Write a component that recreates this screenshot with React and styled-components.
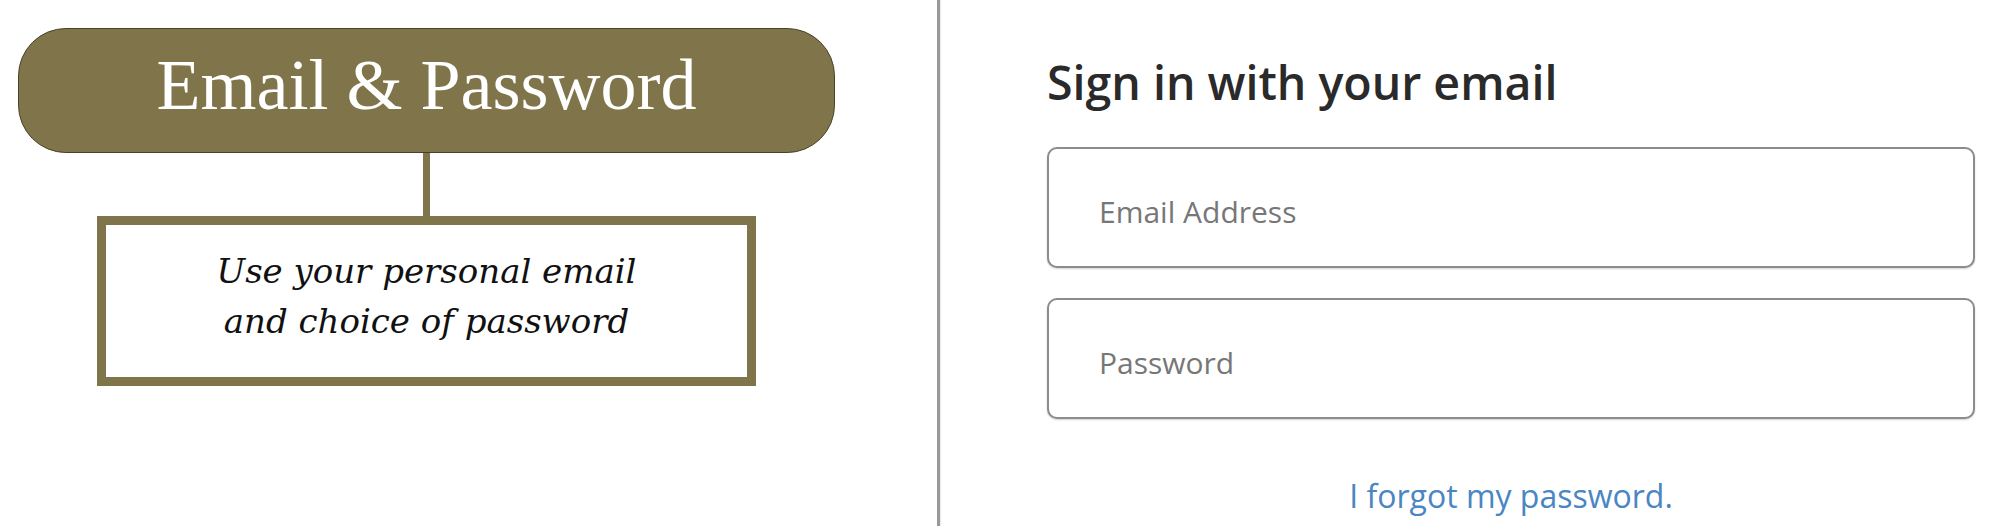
import React from 'react';
import styled, { createGlobalStyle } from 'styled-components';

const GlobalStyle = createGlobalStyle`
  html, body {
    margin: 0;
    padding: 0;
    background: #ffffff;
  }
  #root {
    width: 2000px;
    height: 526px;
    overflow: hidden;
  }
`;

const Page = styled.div`
  display: flex;
  width: 2000px;
  height: 526px;
  background: #fff;
`;

const Diagram = styled.section`
  width: 940px;
  height: 100%;
  box-sizing: border-box;
  padding: 28px 0 0 18px;
  border-right: 3px solid #999;
  box-shadow: 1px 0 1px rgba(0,0,0,0.08);
`;

const Tree = styled.div`
  width: 817px;
  display: flex;
  flex-direction: column;
  align-items: center;
`;

const Pill = styled.div`
  width: 100%;
  height: 125px;
  box-sizing: border-box;
  padding-top: 16px;
  background: #80754a;
  border: 1px solid #4a4228;
  border-radius: 48px;
  text-align: center;
  font-family: "Liberation Serif", "Times New Roman", serif;
  font-size: 72px;
  line-height: 80px;
  color: #ffffff;
`;

const Connector = styled.div`
  width: 7px;
  height: 63px;
  background: #80754a;
`;

const NoteBox = styled.div`
  width: 659px;
  height: 170px;
  box-sizing: border-box;
  padding-top: 21px;
  border: 9px solid #7f744a;
  text-align: center;
  font-family: "DejaVu Serif", "Liberation Serif", serif;
  font-style: italic;
  font-size: 34px;
  line-height: 50px;
  color: #111;
`;

const SignIn = styled.section`
  flex: 1;
  box-sizing: border-box;
  padding: 50px 25px 0 107px;
  display: flex;
  flex-direction: column;
  font-family: "Open Sans", "Noto Sans", sans-serif;
`;

const Heading = styled.h2`
  margin: 0 0 33px;
  font-size: 46.5px;
  font-weight: 600;
  line-height: 64px;
  color: #2a2a2a;
`;

const Fields = styled.div`
  display: flex;
  flex-direction: column;
  gap: 30px;
`;

const Input = styled.input`
  width: 100%;
  height: 121px;
  box-sizing: border-box;
  padding: 8px 50px 0;
  border: 2px solid #8c8c8c;
  border-radius: 10px;
  box-shadow: 0 1px 2px rgba(0,0,0,0.18);
  font-family: "Open Sans", "Noto Sans", sans-serif;
  font-size: 30px;
  color: #333;
  background: #fff;
  outline: none;

  &::placeholder {
    color: #777;
  }
`;

const ForgotLink = styled.a`
  margin-top: 55px;
  align-self: center;
  font-size: 32px;
  line-height: 44px;
  color: #4a85c4;
  text-decoration: none;
  cursor: pointer;
`;

export default function App() {
  return (
    <>
      <GlobalStyle />
      <Page>
        <Diagram>
          <Tree>
            <Pill>Email &amp; Password</Pill>
            <Connector />
            <NoteBox>
              Use your personal email
              <br />
              and choice of password
            </NoteBox>
          </Tree>
        </Diagram>
        <SignIn>
          <Heading>Sign in with your email</Heading>
          <Fields>
            <Input type="email" placeholder="Email Address" />
            <Input type="password" placeholder="Password" />
          </Fields>
          <ForgotLink>I forgot my password.</ForgotLink>
        </SignIn>
      </Page>
    </>
  );
}
